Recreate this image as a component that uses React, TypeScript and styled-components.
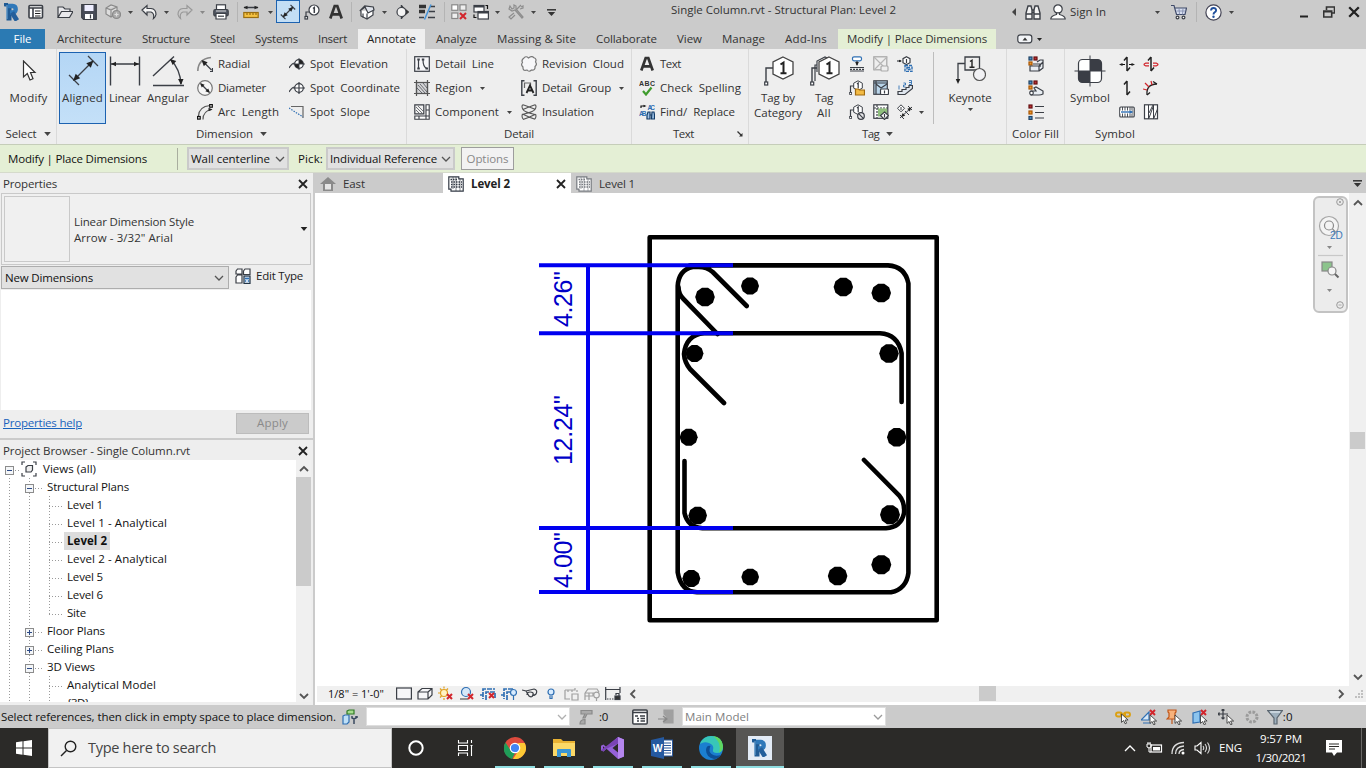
import React, { useLayoutEffect, useRef, useState } from "react";
import styled, { createGlobalStyle, css } from "styled-components";

const INK = "#3b3f46";
const BLUE = "#2f6fb3";

const GlobalStyle = createGlobalStyle`
  * { box-sizing: border-box; }
  html, body { margin: 0; padding: 0; overflow: hidden; }
  body { font-family: "Open Sans", "Noto Sans", sans-serif; font-size: 11.5px; color: #333; }
  svg { display: block; flex: none; }
`;

/* ---------- text with an optional fixed advance width ---------- */
const TextSpan = styled.span<{ $size?: number; $color?: string; $bold?: boolean; $underline?: boolean }>`
  display: inline-block;
  flex: none;
  white-space: pre;
  line-height: 16px;
  font-size: ${(p) => p.$size ?? 11.5}px;
  font-weight: ${(p) => (p.$bold ? 700 : 400)};
  color: ${(p) => p.$color ?? "inherit"};
  text-decoration: ${(p) => (p.$underline ? "underline" : "none")};
`;

type LabelProps = { children: string; w?: number; size?: number; color?: string; bold?: boolean; underline?: boolean };
function Label({ children, w, size, color, bold, underline }: LabelProps) {
  const ref = useRef<HTMLSpanElement>(null);
  const [spacing, setSpacing] = useState(0);
  useLayoutEffect(() => {
    if (!w || !ref.current) return;
    const range = document.createRange();
    range.selectNodeContents(ref.current);
    const natural = range.getBoundingClientRect().width;
    setSpacing((w - natural) / children.length);
  }, [w, children]);
  return (
    <TextSpan
      ref={ref}
      $size={size}
      $color={color}
      $bold={bold}
      $underline={underline}
      style={w ? { width: w, letterSpacing: spacing } : undefined}
    >
      {children}
    </TextSpan>
  );
}

/* ---------- icons ---------- */
type IconProps = { w?: number; h?: number; box?: string; children: React.ReactNode };
const Icon = ({ w = 16, h = 16, box, children }: IconProps) => (
  <svg width={w} height={h} viewBox={box ?? `0 0 ${w} ${h}`} fill="none" stroke={INK} strokeWidth={1.2}>
    {children}
  </svg>
);
const Caret = ({ s = 5, c = "#444" }: { s?: number; c?: string }) => (
  <Icon w={s} h={Math.ceil(s / 2)} box="0 0 10 6"><path d="M0 0h10L5 6z" fill={c} stroke="none" /></Icon>
);
const Chevron = ({ d = "down", c = "#555", sw = 1.3 }: { d?: "down" | "up" | "left" | "right"; c?: string; sw?: number }) => {
  const paths = { down: "M1 3l4 4 4-4", up: "M1 7l4-4 4 4", left: "M7 1L3 5l4 4", right: "M3 1l4 4-4 4" };
  return <Icon w={10} h={10}><path d={paths[d]} stroke={c} strokeWidth={sw} /></Icon>;
};
const CloseX = ({ s = 10, sw = 1.8 }: { s?: number; sw?: number }) => (
  <Icon w={s} h={s} box="0 0 10 10"><path d="M1 1l8 8M9 1l-8 8" stroke="#222" strokeWidth={sw} /></Icon>
);
const CaretBar = () => (
  <Icon w={9} h={7}><path d="M0 .8h9" stroke="#333" strokeWidth={1.5} /><path d="M.8 3h7.4L4.5 7z" fill="#333" stroke="none" /></Icon>
);
const RLetter = ({ w = 16, h = 18 }: { w?: number; h?: number }) => (
  <Icon w={w} h={h} box="0 0 16 18">
    <path d="M.5 3.200V1H4M5 17.500V2" stroke="#1f5a94" strokeWidth={5} />
    <path d="M4 3h4.500q3.200.3 3.200 3.200T8.500 9.500H6" stroke="#2f78b9" strokeWidth={4.400} />
    <path d="M8 9.500l5 8" stroke="#245f9b" strokeWidth={4.800} />
    <path d="M3 2v14" stroke="#6ba6d8" strokeWidth={1} />
  </Icon>
);
const HexOne = ({ double }: { double?: boolean }) => (
  <Icon w={32} h={32}>
    <path d="M11 13H4v14" strokeWidth={1.4} />
    <rect x="2.700" y="27" width="3" height="3" fill="#fff" />
    {double && <><path d="M15 10H7v16" /><path d="M9 17V6l8-4 4 2" fill="#fff" /></>}
    <path d="M21 2l10 5v12l-10 5-10-5V7z" fill="#fff" stroke="#444" strokeWidth={1.3} />
    <path d="M18.500 9.500l3-2v11M18.500 18.200h6" stroke="#222" strokeWidth={2} />
  </Icon>
);
const TinyHex = () => (
  <>
    <path d="M1.500 13V6H5" />
    <rect x=".6" y="12.500" width="2" height="2" fill="#fff" strokeWidth={0.8} />
    <path d="M9 .8l4.300 2.400v5L9 10.500 4.700 8.200v-5z" fill="#fff" strokeWidth={1} />
    <path d="M8 4l1.200-1v5.300" />
  </>
);
const arrow = (x: number, y: number, a: number, s = 5, c = "#222") => (
  <path d={`M0 0l${-s} ${-s * 0.45}v${s * 0.9}z`} transform={`translate(${x} ${y}) rotate(${a})`} fill={c} stroke="none" />
);
const redX = (x: number, y: number, s = 6) => (
  <path d={`M${x} ${y}l${s} ${s}M${x + s} ${y}l${-s} ${s}`} stroke="#d2252c" strokeWidth={2} />
);
const cursor = (x: number, y: number, k = 0.6) => (
  <path d="M0 0v14l3.500-3.200 2.500 5.500 2.500-1-2.500-5.300H11z" transform={`translate(${x} ${y}) scale(${k})`} fill="#fff" stroke="#333" strokeWidth={1.4} />
);
const swatches = (
  <>
    <rect x="1" y="1" width="3" height="3" fill="#4a90c8" stroke="#246" />
    <rect x="6" y="1" width="3" height="3" fill="#c02f35" stroke="#611" />
    <rect x="1" y="6" width="3" height="3" fill="#ef9a2d" stroke="#a50" />
  </>
);

const ic: Record<string, React.ReactNode> = {
  menu: <Icon><rect x="1" y="1.500" width="13.500" height="12.500" rx="1" fill="#fff" strokeWidth={1.6} /><path d="M1 4h13M5 4v10" strokeWidth={1.6} /><path d="M7 7h5.500M7 9.500h5.500M7 12h5.500" stroke="#222" /></Icon>,
  open: <Icon><path d="M1 13.500V3h5l2 2h5v2.500M1 13.500l3.500-6H16l-3.500 6z" fill="#e9e9ec" /></Icon>,
  save: <Icon><path d="M.7.7h14.600v14.600H2.500L.7 13.500z" fill="#474b57" /><rect x="3.500" y="1" width="9" height="6" fill="#eef" stroke="none" /><rect x="4" y="10" width="8" height="5" fill="#fff" stroke="none" /><path d="M9.500 10.500v4" /></Icon>,
  sync: <Icon><path d="M1 4l5-3 6 2v6l-6 4-5-3zM1 4l5 2 6-3M6 6v7" stroke="#8a8a8a" fill="#ddd" /><circle cx="11.500" cy="10.500" r="4" fill="#aaa" stroke="#8a8a8a" /><path d="M9.500 10.500h4M11.500 8.500v4" stroke="#ddd" /></Icon>,
  undo: <Icon><path d="M1 6l5-4.500v3h4q5 .5 5 6-.5 2.500-2.500 4 1.200-5-2.500-6.500H6v3z" fill="#f4f4f4" /></Icon>,
  redo: <Icon><path d="M15 6l-5-4.500v3H6q-5 .5-5 6 .5 2.500 2.500 4Q2.300 9.500 6 8h4v3z" stroke="#999" /></Icon>,
  print: <Icon><rect x="3.500" y=".8" width="9" height="5" fill="#fff" /><rect x=".8" y="5.500" width="14.400" height="6.500" rx="1.500" fill="#555b66" /><path d="M3 7h10" stroke="#fff" strokeWidth={0.8} /><path d="M3 9.500h10v5.500H3z" fill="#fff" /><path d="M5 12.200h6" /></Icon>,
  measure: <Icon><path d="M1 3.500h14" strokeWidth={1.5} />{arrow(15.5, 3.5, 0, 4)}{arrow(0.5, 3.5, 180, 4)}<rect x=".8" y="8.500" width="14.400" height="5" fill="#f5c242" stroke="#9a6d10" /><path d="M4 9v2M7 9v2M10 9v2M13 9v2" stroke="#9a6d10" /></Icon>,
  alignedS: <Icon><path d="M3 13L13 3M.8 10.500l4.700 4.700M10.500.8l4.700 4.700" />{arrow(13.3, 2.7, -45, 5)}{arrow(2.7, 13.3, 135, 5)}</Icon>,
  tagS: <Icon><path d="M2 13V8h4" /><rect x="1" y="12.500" width="2.500" height="2.500" fill="#fff" /><circle cx="10" cy="6" r="5" fill="#fff" /><path d="M9 4.500l1.300-1V9" strokeWidth={1.5} /></Icon>,
  bigA: <Icon w={14} h={16}><path d="M1.300 14.500L5.700 2h2.600l4.400 12.500M3 10.300h8" stroke="#333" strokeWidth={2.700} /></Icon>,
  house: <Icon><path d="M2 7v5l6 3 6-4V6" fill="#fff" /><path d="M.8 7l5-5 8.500 1L15 6l-6 3-3-6z" fill="#dfe3ea" /><path d="M8 9.500V15M4 9.500v4" /></Icon>,
  section: <Icon w={14}><path d="M7 2.500L13.500 8 7 13.500z" fill="#333" stroke="#333" /><circle cx="6.500" cy="8" r="4.500" fill="#f4f4f4" /><path d="M6.500 1v2.500M6.500 12.500V15" strokeWidth={1.500} /></Icon>,
  thin: <Icon><path d="M0 2.500h7M0 7.500h6" strokeWidth={3.400} stroke="#333" /><path d="M0 13.500h5M11 2.500h5M10 7.500h6M9 13.500h7" strokeWidth={1.500} /><path d="M12 .5L5.500 15.500" stroke="#4593d8" strokeWidth={1.500} /></Icon>,
  closeWin: <Icon><rect x=".8" y=".8" width="6" height="5.500" fill="#fff" stroke="#888" /><rect x="9" y=".8" width="6" height="5.500" stroke="#888" fill="#eee" /><rect x=".8" y="9" width="6" height="5.500" stroke="#888" fill="#eee" />{redX(9, 9)}</Icon>,
  switchWin: <Icon><rect x="1" y="1.500" width="10" height="6.500" fill="#fff" /><path d="M1 2.700h10" strokeWidth={1.600} /><rect x="5" y="7.500" width="10.400" height="7.500" fill="#fff" /><path d="M5 8.700h10.400" strokeWidth={1.600} /><path d="M12.500 1.500h2V5M1 10.500v3h2.500" stroke="#111" /></Icon>,
  tools: <Icon><path d="M1 5l3 2 3-1 7 8 1-1-7-8V2L6 1v3L4 5 2 2zM13 1L9 5M6 9l-5 4 2 2 4-4M12 5l3-1V2l-2 1" stroke="#8d8d8d" /></Icon>,
  binoc: <Icon><path d="M3 2h3l1 4v9H1V9zM13 2h-3L9 6v9h6V9zM7 6h2M1.500 10h5M9.500 10h5M7 8.500h2" fill="#f3f3f3" strokeWidth={1.400} /></Icon>,
  person: <Icon><circle cx="8" cy="5" r="4.200" fill="#fff" /><path d="M.8 15q0-3 5.700-4.500V9h3v1.500q5.700 1.500 5.700 4.500z" fill="#fff" /></Icon>,
  cart: <Icon><path d="M0 1.500h3L5.500 10.500H14L15.500 4H4" fill="#d7def0" stroke="#3f4a68" /><path d="M5.500 7h9M8 4.500l.5 6M12 4.500l-.5 6" stroke="#7c88a8" strokeWidth={0.800} /><circle cx="6.500" cy="13.500" r="1.400" fill="#fff" /><circle cx="12.500" cy="13.500" r="1.400" fill="#fff" /></Icon>,
  restore: <Icon w={12} h={12}><path d="M3.500 4V1h8v6H9M.7 5h8v6h-8zM.7 5.700h8" strokeWidth={1.600} stroke="#333" /></Icon>,
  toggle: <Icon w={16} h={10}><rect x=".8" y=".8" width="14" height="8" rx="2.500" fill="#f2f4f7" /><path d="M5.500 6.500h5L8 3.500z" fill="#333" stroke="none" /></Icon>,
  /* ribbon, large */
  cursor: <Icon w={16} h={22}><path d="M2.500 1v16l3.800-3.500L9 20l3-1.300-2.500-6.200h4.500z" fill="#fff" stroke="#333" strokeWidth={1.200} /></Icon>,
  aligned: <Icon w={32} h={32}><path d="M7 25L25 7M2 20l10 10M21 1l10 10" strokeWidth={1.300} />{arrow(26.500, 5.500, -45, 7)}{arrow(6, 26, 135, 7)}</Icon>,
  linear: <Icon w={32} h={32}><path d="M1.500 1.500v29M30.500 1.500v29M2 9h28" strokeWidth={1.400} />{arrow(30, 9, 0, 5)}{arrow(2, 9, 180, 5)}</Icon>,
  angular: <Icon w={32} h={32}><path d="M1 30.500h31M1 21L22 1.500M19 5q9 9 10 24" strokeWidth={1.400} />{arrow(18, 4, 222, 6)}{arrow(29, 30, 88, 6)}</Icon>,
  keynote: <Icon w={32} h={32}><path d="M11 2h14.500v13H11zM11 8.500H4v18" strokeWidth={1.300} />{arrow(4, 29, 90, 5)}<path d="M16 6.500l2-1.300v7M15.500 12.300h5" strokeWidth={1.400} stroke="#222" /><circle cx="25.500" cy="19.500" r="6" fill="#f1f1f4" stroke="#555" /></Icon>,
  symbol: <Icon w={32} h={32}><rect x="4.500" y="4.500" width="23" height="23" rx="4" fill="#fff" /><path d="M16 4.500h7.500q4 0 4 4V16H16zM16 16v11.500H8.500q-4 0-4-4V16z" fill="#3a3d45" stroke="none" /><path d="M16 .5v31M.5 16h31" strokeWidth={1} /></Icon>,
  /* ribbon, small */
  radial: <Icon><path d="M.8 15Q1 3 14 1.500" stroke="#888" strokeWidth={1.600} /><path d="M6 5.500l8.500 8.500M13 15.500h2.500V12" />{arrow(4.500, 4, 225, 6)}</Icon>,
  diameter: <Icon><circle cx="8" cy="8" r="7.300" stroke="#777" fill="#f6f6f6" /><path d="M4 4l8 8" />{arrow(13, 13, 45, 4.500)}{arrow(3, 3, 225, 4.500)}</Icon>,
  arcLength: <Icon><path d="M1.500 12Q2 2.500 13 1.500M6 15.500Q6 7 14.500 5.500" stroke="#555" />{arrow(15.500, 5.500, 0, 4)}<rect x=".6" y="12.500" width="2.600" height="2.600" fill="#fff" stroke="#111" /><rect x="12.700" y=".6" width="2.600" height="2.600" fill="#fff" stroke="#111" /></Icon>,
  spotElev: <Icon><path d="M0 12q3-5 6-5" /><circle cx="10" cy="8" r="4.300" fill="#fff" /><path d="M10 3.700A4.300 4.300 0 0 1 14.300 8H10zM10 12.300A4.300 4.300 0 0 1 5.700 8H10z" fill="#222" stroke="none" /><path d="M10 2v12M4 8h12" strokeWidth={0.900} /></Icon>,
  spotCoord: <Icon><path d="M0 12q3-5 6-5" /><circle cx="10" cy="8" r="4.300" fill="#fff" /><path d="M10 2v12M4 8h12" /></Icon>,
  spotSlope: <Icon><path d="M2 2.500h12V14" stroke="#666" /><path d="M0 4l14 9" stroke={BLUE} strokeDasharray="1.500 1.200" /></Icon>,
  detailLine: <Icon><rect x=".7" y=".7" width="14.600" height="14.600" fill="#f7f7f9" /><path d="M4.500 3.500v9M9 3.500q0 8 4 9" strokeWidth={1.200} /><path d="M3.300 3.500h2.500M3.300 12.500h2.500M7.800 3.500h2.500M11.500 12.500h2.500" strokeWidth={2} /></Icon>,
  region: <Icon><rect x="2.500" y="2.500" width="11" height="11" fill="#d4d4d6" /><path d="M0 2.500h16M0 13.500h16M2.500 0v16M13.500 0v16" stroke="#555" /><path d="M4 5l7 8M6 4l7 8M3 8l5 5M9 3l4 5" strokeWidth={0.700} /></Icon>,
  component: <Icon><path d="M.8.8h9v9h-9z" fill="#f1f1f1" /><path d="M2 3l6 6M4 2l5 5M2 6l3 3" strokeWidth={0.700} /><path d="M12 .8h3.200v14.400H.8V12H12zM12 6h3M12 12h3M5 12v3M12 12v3" fill="#fff" strokeWidth={1.100} /></Icon>,
  cloud: <Icon><path d="M3 2q2-2.500 4.500 0Q11-.8 13 1.800q3 1 1.500 4.200 2 2.500-.5 4.500.5 4-3.500 3.500Q8 16.500 6 14q-4.500 1.500-4-3Q-.5 9 1.500 6.500 0 4 3 2z" fill="#f7f7f9" stroke="#777" /></Icon>,
  group: <Icon><path d="M3.500.8H.8v14.400h2.700M12.500.8h2.700v14.400h-2.700" strokeWidth={1.400} /><path d="M3.500 8V3h6v2" stroke="#666" /><path d="M5.500 13L9 5.500l3.500 7.500M7 10.500h4" strokeWidth={1.800} stroke="#222" /></Icon>,
  insulation: <Icon><path d="M2 .8q6 2 12 4.500-1 2.500-12 5 6 3 12 5M14 .8Q8 3 2 5.500q1 2.500 12 5-6 3-12 5M2 .8q-2 1 0 4.700M14 .8q2 1 0 4.700M2 10.300q-2 1 0 4.700M14 10.300q2 1 0 4.700" stroke="#555" strokeWidth={1.100} /></Icon>,
  launcher: <Icon w={6} h={6}><path d="M.5.5l4 4" stroke="#333" /><path d="M5.500 2v3.500H2z" fill="#333" stroke="none" /></Icon>,
  beam: <Icon><rect x="3.500" y=".8" width="9" height="4" rx="1.500" stroke={BLUE} fill="#fff" /><path d="M8 5v4" />{arrow(8, 10, 90, 4)}<path d="M1 11.500h14M1 15h14" /><path d="M1 13.300h14" strokeDasharray="2 1" /></Icon>,
  greyX: <Icon><rect x=".8" y=".8" width="13" height="13" stroke="#a5a5a5" /><path d="M1 1l13 13M14 1L1 14" stroke="#b5b5b5" /><rect x="8" y="10" width="7" height="5" rx="1" fill="#eee" stroke="#aaa" /></Icon>,
  roomTag: <Icon><path d="M0 5h4" />{arrow(5, 5, 0, 3)}<path d="M9.500.8L13 2.700v4L9.500 8.600 6 6.700v-4z" fill="#fff" /><path d="M9.500 3v4" /><path d="M8 9.500h7v6H8zM10 11.500h3v2h-3z" stroke={BLUE} strokeDasharray="3 1" strokeWidth={1.400} /></Icon>,
  hexFolder: <Icon><TinyHex /><path d="M6.500 9h3l1 1h5v5h-9z" fill="#f3bb45" stroke="#a06a10" /></Icon>,
  areaTag: <Icon><rect x=".8" y=".8" width="13.500" height="13.500" fill="#b9d5ea" /><path d="M1 3h13M3 1v13M3 4l5 4 6-4" /><rect x="7.500" y="9" width="8" height="5.500" rx="1" fill="#fff" /><path d="M11.500 10.500v3" /></Icon>,
  stairs: <Icon><path d="M1 14.500v-3h4v-2h4v-2h3V5.500h3.500v3L8 14.500z" fill="#dfe6ee" /><path d="M2 5.500v4M6.500 3h2v2h-2v2h2M12 .5h2.500v4H12M12 2.500h2" stroke={BLUE} strokeWidth={0.900} /></Icon>,
  hexSlash: <Icon><TinyHex /><circle cx="12" cy="12" r="3.300" fill="#e6e6e8" /><path d="M9.700 9.700l4.600 4.600" /></Icon>,
  viewTag: <Icon><rect x=".8" y=".8" width="14" height="13.500" fill="#fff" /><path d="M1 4h14M4 1v13" strokeDasharray="2 1" /><rect x="5" y="4.500" width="9" height="8" fill="#8fbf7d" stroke="none" /><path d="M11.500 8l4 3.500-4 4-4-4z" fill="#fff" /><path d="M11.500 10v3.500" /></Icon>,
  multiRebar: <Icon><path d="M4 .8l3.500 3.500L4 7.800.5 4.300z" fill="#fff" strokeWidth={1} /><path d="M4 3v3M3 14L15 3M3 11l4 4M8 7l4 4M11 2l4 4" strokeWidth={1} />{arrow(14.500, 3.500, -42, 4)}{arrow(4, 13, 138, 4)}</Icon>,
  fillDuct: <Icon>{swatches}<path d="M2 10h9v5H2zM11 10l4-4v6l-4 3M9 6l3-2h3v3" fill="#e8edf2" /><path d="M5 8h7v3" /></Icon>,
  fillPipe: <Icon>{swatches}<path d="M3 11h5L6 8l2-1 7 4v3q-2 1-4 1H3z" fill="#e8edf2" /><circle cx="3.500" cy="13" r="1.800" fill="#fff" /></Icon>,
  fillLegend: <Icon><rect x="1" y="1" width="3" height="3" fill="#c02f35" stroke="#611" /><rect x="1" y="7" width="3" height="3" fill="#ef9a2d" stroke="#a50" /><rect x="1" y="12.500" width="3" height="3" fill="#4a90c8" stroke="#246" /><path d="M7 2.500h9M7 8.500h9M7 14h9" /></Icon>,
  span1: <Icon><path d="M8 1v14M8 1L5 4.500M8 15l3-3.500" strokeWidth={1.500} stroke="#222" /><path d="M1 8.500h5M10 8.500h5" stroke="#111" />{arrow(16, 8.500, 0, 3.500)}{arrow(0, 8.500, 180, 3.500)}</Icon>,
  span2: <Icon><path d="M8 1v14M8 1L5 4.500M8 15l3-3.500" strokeWidth={1.500} stroke="#222" /><path d="M6 9.800H2.500q-3-1.300 0-2.600H6M10 9.800h3.500q3-1.300 0-2.600H10" stroke="#d2252c" /></Icon>,
  span3: <Icon><path d="M8 1v14M8 1L5 4.500M8 15l3-3.500" strokeWidth={1.500} stroke="#222" /></Icon>,
  span4: <Icon><path d="M4 15Q3 4 14 4M4 15l3-2.500M10 1.500l4 2.500" stroke="#222" strokeWidth={1.300} /><path d="M0 9l4 1M2 3l4 4M8 1l1 4" stroke="#d2252c" /></Icon>,
  areaSym: <Icon><rect x=".8" y="3" width="14.400" height="10" rx="1" fill="#fff" /><path d="M3.500 3v10M6 3v10M8.500 3v10M11 3v10M13 3v10" strokeWidth={0.900} /><path d="M1 8h12" stroke="#fff" strokeWidth={3} /><path d="M2 8h11" stroke={BLUE} strokeWidth={1.400} />{arrow(14.500, 8, 0, 4, BLUE)}</Icon>,
  fabric: <Icon><rect x="1.500" y=".8" width="13" height="14" fill="#fff" /><path d="M5.500 1v14M10.500 1v14M6 14l4-11M6 9l4-8M11 14l3.500-9" strokeWidth={1} /></Icon>,
  editType: <Icon><path d="M1 3l1.500-2H7v5H1zM8.500 3L10 1h5v5.500H8.500zM1 9l1.500-2H7v8H1z" fill="#fff" /><rect x="9" y="8" width="6" height="7.500" fill="#cfe0f2" stroke="#234" /><path d="M10 10.500h4M10 13h1M13 13h1" stroke={BLUE} strokeWidth={1.600} /></Icon>,
  home: <Icon><path d="M0 8l8-7 8 7h-3v7H3V8z" fill="#8a8a8a" stroke="none" /><path d="M5 8h6v5.500H5z" fill="#e5e5e5" stroke="none" /></Icon>,
  views: <Icon><path d="M4 1H1v3M12 1h3v3M1 12v3h3M15 12v3h-3" /><path d="M5 6l2-1.500h4.500V9L10 11H5z" fill="#eee" /></Icon>,
};

const PlanIcon = ({ c }: { c: string }) => (
  <Icon><path d="M.8.800h10v2h4.400v12.400H3v-2H.8z" stroke={c} fill="#fff" /><path d="M2.500 3.500H10M3 6h11M3 8.500h11M3 11h11" stroke={c} strokeDasharray="1.500 1" strokeWidth={1.300} /><path d="M5 1v12M8 1v14M12 3v12" stroke={c} strokeWidth={0.600} /></Icon>
);
const SpellIcon = () => (
  <Icon>
    <text x="0" y="6" fontSize="7" fontWeight="700" textLength="16" fill="#333" stroke="none" fontFamily="Liberation Sans, sans-serif">ABC</text>
    <path d="M4 11l3 3.500 5.500-7" stroke="#3f9c2d" strokeWidth={2.200} />
  </Icon>
);
const ReplaceIcon = () => (
  <Icon>
    <g fontSize="6.500" fontWeight="700" fill={BLUE} stroke="none" fontFamily="Liberation Sans, sans-serif">
      <text x="8.500" y="5.500" textLength="7.500">AC</text>
      <text x="0" y="12" textLength="7.500">AB</text>
    </g>
    <path d="M2 4V2h4" stroke="#111" />{arrow(7.500, 2, 0, 3)}
    <path d="M9 8h2v7H8v-4zM13 8h2l.5 3v4h-3zM11 11h2" fill="#9fc3e8" stroke="#123a66" />
  </Icon>
);

/* ---------- frame ---------- */
const Screen = styled.div`
  width: 1366px; height: 768px; display: flex; flex-direction: column; background: #cbcbcb; overflow: hidden;
`;
const Row = styled.div<{ $gap?: number; $pl?: number; $pb?: number; $h?: number }>`
  display: flex; align-items: center; gap: ${(p) => p.$gap ?? 0}px; padding: 0 0 ${(p) => p.$pb ?? 0}px ${(p) => p.$pl ?? 0}px;
  ${(p) => p.$h && css`height: ${p.$h}px;`} flex: none;
`;
const Slot = styled.div<{ $w: number; $active?: boolean }>`
  width: ${(p) => p.$w}px; height: 100%; flex: none; display: flex; align-items: center; justify-content: center;
  ${(p) => p.$active && css`background: #c3def5; border: 1px solid #1c62b0; height: 23px; margin-bottom: 1px;`}
`;
const Spacer = styled.div<{ $w?: number }>`${(p) => (p.$w ? css`width: ${p.$w}px; flex: none;` : css`flex: 1;`)}`;
const VLine = styled.div<{ $h: number; $c?: string }>`width: 1px; height: ${(p) => p.$h}px; background: ${(p) => p.$c ?? "#b4b4b4"}; flex: none;`;

const TitleBar = styled.header`height: 24px; display: flex; align-items: center; flex: none;`;
const TitleText = styled.div`margin-bottom: 4px; display: flex;`;
const TabStrip = styled.nav`height: 25px; padding-top: 5px; display: flex; align-items: stretch; flex: none;`;
const RibbonTab = styled.div<{ $kind?: "file" | "active" | "context" }>`
  display: flex; align-items: center; justify-content: center; flex: none; padding: 0 10px;
  ${(p) => p.$kind === "file" && css`width: 45px; margin-right: 2px; background: #2b7ab3; color: #fff; padding: 0;`}
  ${(p) => p.$kind === "active" && css`background: #efefef; padding: 0 9px; margin: 0 1px; color: #222;`}
  ${(p) => p.$kind === "context" && css`background: #e4efd5; padding: 0 9px; margin: 0 0 0 1px;`}
`;
const ToggleBox = styled.div`display: flex; align-items: center; gap: 4px; padding-left: 21px;`;

const Ribbon = styled.section`height: 95px; background: #eee; display: flex; flex: none;`;
const Panel = styled.div<{ $w: number; $last?: boolean }>`
  width: ${(p) => p.$w}px; flex: none; display: flex; flex-direction: column; border-right: 1px solid ${(p) => (p.$last ? "transparent" : "#dadada")};
`;
const PanelBody = styled.div<{ $pl?: number }>`height: 76px; display: flex; padding: 3px 0 0 ${(p) => p.$pl ?? 0}px;`;
const PanelTitle = styled.div<{ $shift?: number }>`
  height: 18px; display: flex; align-items: center; justify-content: ${(p) => (p.$shift ? "flex-start" : "center")}; gap: 7px; padding-left: ${(p) => p.$shift ?? 0}px;
`;
const BigButton = styled.div<{ $w: number; $active?: boolean }>`
  width: ${(p) => p.$w}px; height: 72px; flex: none; display: flex; flex-direction: column; align-items: center; padding-top: 3px;
  ${(p) => p.$active && css`background: linear-gradient(#b4d6f5, #c4e0f8); box-shadow: inset 0 0 0 1px #1c62b0;`}
`;
const BigIcon = styled.div`height: 32px; display: flex; align-items: center; margin-bottom: 3px;`;
const BigLabel = styled.div`height: 15px; display: flex; align-items: center;`;
const BigCaret = styled.div`padding-top: 3px;`;
const Stack = styled.div<{ $w: number }>`width: ${(p) => p.$w}px; flex: none; display: flex; flex-direction: column;`;
const Command = styled.div`height: 24px; display: flex; align-items: center; gap: 5px;`;
const CaretBox = styled.div`padding-left: 3px;`;
const IconGrid = styled.div<{ $cols: number }>`
  display: grid; flex: none; align-content: start; grid-template-columns: repeat(${(p) => p.$cols}, 24px); grid-auto-rows: 24px; place-items: center;
`;
const GridCaret = styled.div`height: 72px; width: 14px; flex: none; display: flex; align-items: flex-end; padding-bottom: 10px;`;

const OptionsBar = styled.section`
  height: 29px; flex: none; display: flex; align-items: center; background: #e4efd5; border-top: 1px solid #c5cdb9; border-bottom: 1px solid #d5dacb;
  padding-left: 8px; color: #111;
`;
const Combo = styled.div<{ $w: number; $h?: number; $bg?: string; $bd?: string }>`
  width: ${(p) => p.$w}px; height: ${(p) => p.$h ?? 23}px; flex: none; display: flex; align-items: center; justify-content: space-between;
  padding: 0 2px; background: ${(p) => p.$bg ?? "#e1e1e1"}; border: ${(p) => p.$bd ?? "2px solid #cacaca"}; color: #111;
`;
const OptionsButton = styled.div`
  width: 53px; height: 23px; display: flex; align-items: center; justify-content: center; background: #f2f2f2; border: 1px solid #9d9d9d; color: #888;
`;

const Workspace = styled.main`height: 532px; display: flex; flex: none;`;
const Sidebar = styled.aside`width: 313px; background: #eee; display: flex; flex-direction: column; flex: none;`;
const PaletteHeader = styled.div`height: 20px; flex: none; display: flex; align-items: center; justify-content: space-between; padding: 2px 5px 0 3px;`;
const TypeSelector = styled.div`
  height: 72px; width: 310px; margin-left: 1px; flex: none; display: flex; align-items: center; border: 1px solid #c9c9c9; padding: 0 2px; background: #f0f0f0;
`;
const TypePreview = styled.div`width: 66px; height: 66px; border: 1px solid #c9c9c9; margin-right: 4px;`;
const TypeNames = styled.div`display: flex; flex-direction: column; flex: 1; padding-top: 2px;`;
const TypeRow = styled.div`height: 25px; flex: none; display: flex; align-items: center; padding-left: 1px;`;
const PropertyList = styled.div`height: 120px; width: 310px; margin-left: 1px; background: #fff; flex: none;`;
const PaletteFooter = styled.div`
  height: 30px; flex: none; display: flex; align-items: center; justify-content: space-between; padding: 0 4px 2px 3px; border-bottom: 2px solid #cbcbcb;
`;
const ApplyButton = styled.div`
  width: 73px; height: 21px; background: #cbcbcb; border: 1px solid #bcbcbc; color: #8a8a8a; display: flex; align-items: center; justify-content: center;
`;
const TreeArea = styled.div`height: 242px; flex: none; display: flex; padding-right: 2px;`;
const Tree = styled.div`flex: 1; background: #fff; color: #111; overflow: hidden;`;
const TreeRow = styled.div`height: 18px; display: flex; align-items: stretch;`;
const Guide = styled.div<{ $w: number; $full?: boolean; $half?: boolean; $stub?: boolean }>`
  width: ${(p) => p.$w}px; flex: none; display: flex; justify-content: flex-start;
  background-image: ${(p) =>
    [
      p.$full || p.$half ? "repeating-linear-gradient(#9a9a9a 0 1px, transparent 1px 3px)" : "",
      p.$stub ? "repeating-linear-gradient(90deg, #9a9a9a 0 1px, transparent 1px 3px)" : "",
    ].filter(Boolean).join(",") || "none"};
  background-size: ${(p) => [p.$full ? "1px 100%" : "", p.$half ? "1px 10px" : "", p.$stub ? "15px 1px" : ""].filter(Boolean).join(",")};
  background-position: ${(p) => [p.$full || p.$half ? "9px 0" : "", p.$stub ? "9px 10px" : ""].filter(Boolean).join(",")};
  background-repeat: no-repeat;
`;
const Expander = styled.div`padding: 6px 0 0 5px;`;
const TreeText = styled.div<{ $selected?: boolean }>`
  display: flex; align-items: center; padding: 0 3px; ${(p) => p.$selected && css`background: #dcdcdc;`}
`;
const ScrollColumn = styled.div<{ $w: number }>`
  width: ${(p) => p.$w}px; flex: none; background: #f0f0f0; display: flex; flex-direction: column; align-items: center;
`;
const Thumb = styled.div<{ $w: number; $h: number }>`width: ${(p) => p.$w}px; height: ${(p) => p.$h}px; background: #cbcbcb; flex: none;`;
const Splitter = styled.div`width: 2px; background: #cbcbcb; flex: none;`;
const DocArea = styled.div`flex: 1; display: flex; flex-direction: column; background: #fff;`;
const DocTabs = styled.div`height: 20px; flex: none; display: flex; background: #cbcbcb; align-items: stretch; padding-right: 4px;`;
const DocTab = styled.div<{ $active?: boolean }>`
  width: 128px; display: flex; align-items: center; gap: 7px; padding: 1px 5px 0 5px; ${(p) => p.$active && css`background: #fff; color: #222;`}
`;
const CanvasRow = styled.div`height: 493px; flex: none; display: flex;`;
const CanvasBox = styled.div`position: relative; width: 1034px; flex: none;`;
const NavBar = styled.div`
  position: absolute; right: 1px; top: 3px; width: 35px; height: 117px; border: 2px solid #c3c3c3; border-radius: 6px; background: #ececec;
  display: flex; flex-direction: column; align-items: center;
`;
const ViewBar = styled.div`height: 16px; flex: none; background: #f0f0f0; margin-left: 2px; display: flex; align-items: center; padding-bottom: 1px;`;
const StatusBar = styled.footer`height: 23px; flex: none; display: flex; align-items: center; background: #cbcbcb; color: #111;`;
const Taskbar = styled.footer`height: 40px; flex: none; display: flex; align-items: stretch; background: #2b2a28; color: #fff;`;
const SearchBox = styled.div`
  width: 344px; background: #f1f1f1; border: 1px solid #c4c4c4; display: flex; align-items: center; gap: 11px; padding-left: 11px; color: #444;
`;
const TaskItem = styled.div<{ $open?: boolean; $active?: boolean }>`
  width: 48px; margin-right: 1px; display: flex; align-items: center; justify-content: center; flex: none;
  background-color: ${(p) => (p.$active ? "#575654" : "transparent")};
  background-image: ${(p) => (p.$open || p.$active ? "linear-gradient(#8fdde0, #8fdde0)" : "none")};
  background-size: ${(p) => (p.$active ? "48px 2px" : "40px 2px")}; background-position: center bottom; background-repeat: no-repeat;
`;
const ClockBox = styled.div`width: 50px; display: flex; flex-direction: column; align-items: center; justify-content: center; gap: 3px;`;
const RevitTile = styled.div`width: 24px; height: 24px; background: #e3ebf6; display: flex; align-items: center; justify-content: center;`;

/* ---------- sections ---------- */
const quickAccess: [React.ReactNode, number, boolean?][] = [
  [<RLetter />, 24], [ic.menu, 24], [null, 5], [ic.open, 24], [ic.save, 24], [ic.sync, 24], [<Caret />, 11], [ic.undo, 26], [<Caret />, 9],
  [ic.redo, 28], [<Caret c="#888" />, 7], [ic.print, 30], [<VLine $h={20} />, 2], [ic.measure, 26], [<Caret />, 12], [ic.alignedS, 24, true],
  [ic.tagS, 24], [ic.bigA, 23], [<VLine $h={20} />, 8], [ic.house, 23], [<Caret />, 12], [ic.section, 24], [ic.thin, 26], [<VLine $h={20} />, 8],
  [ic.closeWin, 21], [ic.switchWin, 24], [<Caret />, 9], [ic.tools, 28], [<Caret />, 7], [<CaretBar />, 28],
];

const tabs: [string, number, ("file" | "active" | "context")?][] = [
  ["File", 18, "file"], ["Architecture", 65], ["Structure", 48], ["Steel", 25], ["Systems", 43], ["Insert", 29], ["Annotate", 49, "active"],
  ["Analyze", 41], ["Massing & Site", 79], ["Collaborate", 61], ["View", 25], ["Manage", 43], ["Add-Ins", 42], ["Modify | Place Dimensions", 140, "context"],
];

const Cmd = ({ icon, text, w, caret }: { icon: React.ReactNode; text: string; w: number; caret?: boolean }) => (
  <Command>{icon}<Label w={w}>{text}</Label>{caret && <CaretBox><Caret /></CaretBox>}</Command>
);
const Big = ({ icon, lines, w, active, caret }: { icon: React.ReactNode; lines: [string, number][]; w: number; active?: boolean; caret?: boolean }) => (
  <BigButton $w={w} $active={active}>
    <BigIcon>{icon}</BigIcon>
    {lines.map(([t, lw]) => <BigLabel key={t}><Label w={lw}>{t}</Label></BigLabel>)}
    {caret && <BigCaret><Caret /></BigCaret>}
  </BigButton>
);

const Header = () => (
  <>
    <TitleBar>
      {quickAccess.map(([node, w, active], i) => <Slot key={i} $w={w} $active={active}>{node}</Slot>)}
      <Spacer $w={106} />
      <TitleText><Label w={225}>Single Column.rvt - Structural Plan: Level 2</Label></TitleText>
      <Spacer $w={114} />
      <Slot $w={8}><Icon w={4} h={8}><path d="M4 0v8L0 4z" fill="#444" stroke="none" /></Icon></Slot>
      <Slot $w={29}>{ic.binoc}</Slot>
      <Slot $w={21}>{ic.person}</Slot>
      <Spacer $w={2} /><Row><Label w={36}>Sign In</Label></Row>
      <Spacer $w={44} />
      <Slot $w={14}><Caret /></Slot>
      <Slot $w={30}>{ic.cart}</Slot>
      <Slot $w={4}><VLine $h={20} /></Slot>
      <Slot $w={31}><Icon w={17} h={17}><circle cx="8.500" cy="8.500" r="7.600" fill="#fff" stroke="#445" /><path d="M6 6.500Q6.200 4 8.500 4t2.600 2.200q0 1.500-1.500 2.200-1.100.6-1.100 2" stroke="#1f4f9c" strokeWidth={1.900} /><circle cx="8.500" cy="12.700" r="1.200" fill="#1f4f9c" stroke="none" /></Icon></Slot>
      <Slot $w={5}><Caret /></Slot>
      <Spacer $w={57} />
      <Slot $w={26}><Icon w={8} h={12}><path d="M0 10.500h8" stroke="#222" strokeWidth={2} /></Icon></Slot>
      <Slot $w={24}>{ic.restore}</Slot>
      <Slot $w={26}><CloseX s={12} sw={1.900} /></Slot>
    </TitleBar>
    <TabStrip>
      {tabs.map(([t, w, kind]) => <RibbonTab key={t} $kind={kind}><Label w={w}>{t}</Label></RibbonTab>)}
      <ToggleBox>{ic.toggle}<Caret c="#222" /></ToggleBox>
    </TabStrip>
  </>
);

const RibbonBar = () => (
  <Ribbon>
    <Panel $w={57}>
      <PanelBody><Big w={57} icon={ic.cursor} lines={[["Modify", 38]]} /></PanelBody>
      <PanelTitle><Label w={31}>Select</Label><Caret s={7} /></PanelTitle>
    </Panel>
    <Panel $w={350}>
      <PanelBody $pl={2}>
        <Big w={47} active icon={ic.aligned} lines={[["Aligned", 41]]} />
        <Big w={38} icon={ic.linear} lines={[["Linear", 32]]} />
        <Big w={48} icon={ic.angular} lines={[["Angular", 42]]} />
        <Spacer $w={5} />
        <Stack $w={92}>
          <Cmd icon={ic.radial} text="Radial" w={32} />
          <Cmd icon={ic.diameter} text="Diameter" w={48} />
          <Cmd icon={ic.arcLength} text="Arc  Length" w={61} />
        </Stack>
        <Stack $w={112}>
          <Cmd icon={ic.spotElev} text="Spot  Elevation" w={78} />
          <Cmd icon={ic.spotCoord} text="Spot  Coordinate" w={90} />
          <Cmd icon={ic.spotSlope} text="Spot  Slope" w={60} />
        </Stack>
      </PanelBody>
      <PanelTitle><Label w={57}>Dimension</Label><Caret s={7} /></PanelTitle>
    </Panel>
    <Panel $w={225}>
      <PanelBody $pl={7}>
        <Stack $w={107}>
          <Cmd icon={ic.detailLine} text="Detail  Line" w={59} />
          <Cmd icon={ic.region} text="Region" w={37} caret />
          <Cmd icon={ic.component} text="Component" w={64} caret />
        </Stack>
        <Stack $w={110}>
          <Cmd icon={ic.cloud} text="Revision  Cloud" w={82} />
          <Cmd icon={ic.group} text="Detail  Group" w={69} caret />
          <Cmd icon={ic.insulation} text="Insulation" w={52} />
        </Stack>
      </PanelBody>
      <PanelTitle><Label w={30}>Detail</Label></PanelTitle>
    </Panel>
    <Panel $w={117}>
      <PanelBody $pl={7}>
        <Stack $w={109}>
          <Command><Row $pl={1} $gap={6}>{ic.bigA}<Label w={21}>Text</Label></Row></Command>
          <Cmd icon={<SpellIcon />} text="Check  Spelling" w={81} />
          <Cmd icon={<ReplaceIcon />} text="Find/  Replace" w={75} />
        </Stack>
      </PanelBody>
      <PanelTitle $shift={41}><Label w={21}>Text</Label><Spacer $w={29} />{ic.launcher}</PanelTitle>
    </Panel>
    <Panel $w={258}>
      <PanelBody $pl={4}>
        <Big w={50} icon={<HexOne />} lines={[["Tag by", 34], ["Category", 48]]} />
        <Big w={42} icon={<HexOne double />} lines={[["Tag", 18], ["All", 14]]} />
        <IconGrid $cols={3}>{[ic.beam, ic.greyX, ic.roomTag, ic.hexFolder, ic.areaTag, ic.stairs, ic.hexSlash, ic.viewTag, ic.multiRebar].map((n, i) => <div key={i}>{n}</div>)}</IconGrid>
        <Spacer $w={2} />
        <GridCaret><Caret /></GridCaret>
        <VLine $h={72} $c="#bdbdbd" />
        <Big w={72} caret icon={ic.keynote} lines={[["Keynote", 43]]} />
      </PanelBody>
      <PanelTitle><Label w={17}>Tag</Label><Caret s={7} /></PanelTitle>
    </Panel>
    <Panel $w={58}>
      <PanelBody $pl={17}><IconGrid $cols={1}><div>{ic.fillDuct}</div><div>{ic.fillPipe}</div><div>{ic.fillLegend}</div></IconGrid></PanelBody>
      <PanelTitle><Label w={47}>Color Fill</Label></PanelTitle>
    </Panel>
    <Panel $w={101} $last>
      <PanelBody>
        <Big w={50} icon={ic.symbol} lines={[["Symbol", 40]]} />
        <IconGrid $cols={2}>{[ic.span1, ic.span2, ic.span3, ic.span4, ic.areaSym, ic.fabric].map((n, i) => <div key={i}>{n}</div>)}</IconGrid>
      </PanelBody>
      <PanelTitle><Label w={40}>Symbol</Label></PanelTitle>
    </Panel>
  </Ribbon>
);

const Options = () => (
  <OptionsBar>
    <Label w={139}>Modify | Place Dimensions</Label>
    <Spacer $w={30} /><VLine $h={22} $c="#a9ae9f" /><Spacer $w={9} />
    <Combo $w={102}><Label w={79}>Wall centerline</Label><Chevron /></Combo>
    <Spacer $w={9} /><Label w={25}>Pick:</Label><Spacer $w={3} />
    <Combo $w={129}><Label w={107}>Individual Reference</Label><Chevron /></Combo>
    <Spacer $w={6} />
    <OptionsButton><Label w={42}>Options</Label></OptionsButton>
  </OptionsBar>
);

const Box = ({ open }: { open?: boolean }) => (
  <Expander><Icon w={9} h={9}><rect x=".5" y=".5" width="8" height="8" fill="#f4f6f8" stroke="#8c8c8c" strokeWidth={1} /><path d={open ? "M2 4.500h5" : "M2 4.500h5M4.500 2v5"} stroke="#2c4a86" strokeWidth={1} /></Icon></Expander>
);

type Node = { t: string; w: number; d: number; open?: boolean; last?: boolean; sel?: boolean };
const nodes: Node[] = [
  { t: "Structural Plans", w: 82, d: 1, open: true },
  { t: "Level 1", w: 36, d: 2 }, { t: "Level 1 - Analytical", w: 100, d: 2 }, { t: "Level 2", w: 40, d: 2, sel: true },
  { t: "Level 2 - Analytical", w: 100, d: 2 }, { t: "Level 5", w: 36, d: 2 }, { t: "Level 6", w: 36, d: 2 }, { t: "Site", w: 19, d: 2, last: true },
  { t: "Floor Plans", w: 58, d: 1 }, { t: "Ceiling Plans", w: 67, d: 1 }, { t: "3D Views", w: 48, d: 1, open: true },
  { t: "Analytical Model", w: 89, d: 2 }, { t: "{3D}", w: 22, d: 2 },
];

const Side = () => (
  <Sidebar>
    <PaletteHeader><Label w={54}>Properties</Label><CloseX /></PaletteHeader>
    <TypeSelector>
      <TypePreview />
      <TypeNames><Label w={120}>Linear Dimension Style</Label><Label w={99}>Arrow - 3/32" Arial</Label></TypeNames>
      <Caret s={8} c="#222" />
    </TypeSelector>
    <TypeRow>
      <Combo $w={228} $bd="1px solid #adadad"><Row $pl={1}><Label w={88}>New Dimensions</Label></Row><Row><Chevron /><Spacer $w={2} /></Row></Combo>
      <Spacer $w={6} /><Row $gap={5} $pb={4}>{ic.editType}<Label w={47} color="#222">Edit Type</Label></Row>
    </TypeRow>
    <PropertyList />
    <PaletteFooter><Label w={79} color="#1a63bd" underline>Properties help</Label><ApplyButton><Label w={31}>Apply</Label></ApplyButton></PaletteFooter>
    <PaletteHeader><Label w={187}>Project Browser - Single Column.rvt</Label><CloseX /></PaletteHeader>
    <TreeArea>
      <Tree>
        <TreeRow>
          <Guide $w={21} $stub><Box open /></Guide>
          <Row>{ic.views}</Row>
          <Spacer $w={3} /><TreeText><Label w={53}>Views (all)</Label></TreeText>
        </TreeRow>
        {nodes.map((n) => (
          <TreeRow key={n.t}>
            <Guide $w={20} $full />
            {n.d === 1 ? (
              <Guide $w={24} $full $stub><Box open={n.open} /></Guide>
            ) : (
              <><Guide $w={20} $full /><Guide $w={24} $full={!n.last} $half={n.last} $stub /></>
            )}
            <TreeText $selected={n.sel}><Label w={n.w} bold={n.sel}>{n.t}</Label></TreeText>
          </TreeRow>
        ))}
      </Tree>
      <ScrollColumn $w={15}><Row $h={17}><Chevron d="up" sw={1.800} /></Row><Thumb $w={15} $h={109} /><Spacer /><Row $h={12}><Chevron sw={1.800} /></Row></ScrollColumn>
    </TreeArea>
  </Sidebar>
);

const bars: [number, number, number][] = [
  [705, 297, 9.8], [750, 286, 9], [843.3, 287, 9.7], [881.2, 293, 9.8], [694.5, 353.5, 9], [889, 353.5, 9.8], [688.7, 437.2, 9], [896.7, 437.2, 9.7],
  [697.7, 515.5, 9.3], [890, 514.7, 10], [691.3, 578.5, 9], [750.2, 577, 8.8], [837.6, 576, 9.8], [881.3, 564.7, 10],
];
const dims: [string, number, number][] = [["4.26\"", 327, 56], ["12.24\"", 465, 70], ["4.00\"", 588, 56]];
const polygon = (x: number, y: number, r: number, n = 10) =>
  Array.from({ length: n }, (_, i) => `${x + r * Math.cos((i * 2 * Math.PI) / n)},${y + r * Math.sin((i * 2 * Math.PI) / n)}`).join(" ");

const Drawing = () => (
  <svg width="1034" height="492" viewBox="315 193 1034 492" fill="none" strokeLinecap="round" strokeLinejoin="round">
    <g stroke="#000" strokeWidth="4.600">
      <rect x="649.700" y="237.300" width="287" height="382.900" />
      <path d="M690 265.400H888q17 1 20.400 18V573q-2 16-17.400 19.300H697q-16-1-19.300-20V286q1-16 15-19h6q8 0 14 5l34 34" />
      <path d="M678.500 287q0 7 5 12l34 35" />
      <path d="M724 403l-34-34q-5.500-7-6-15 2-19 20-20.700H880q18 1 21.600 20V402" />
      <path d="M684.500 461v52q3 14 18 15.300H886q15-1 18-15 1-11-5-18L864 460" />
    </g>
    {bars.map(([x, y, r]) => <polygon key={`${x}-${y}`} fill="#000" points={polygon(x, y, r)} />)}
    <g stroke="#0000f0" strokeWidth="4" strokeLinecap="butt">
      <path d="M539 265.300h194M539 333.200h194M539 528h194M539 592h194M588 264v328" />
    </g>
    {dims.map(([t, y, len]) => (
      <text key={t} transform={`translate(572 ${y}) rotate(-90)`} fontFamily="Liberation Sans, Arial, sans-serif" fontSize="25" textLength={len} fill="#0000c8">{t}</text>
    ))}
  </svg>
);

const viewIcons: React.ReactNode[] = [
  <Icon><rect x=".6" y="2" width="14.800" height="11" fill="#f6f6f8" /></Icon>,
  <Icon><path d="M1 6l4-3.500h10V9l-4 4H1zM1 6h10v7M11 6l4-3.500" fill="#f6f6f8" /></Icon>,
  <Icon><circle cx="6" cy="7" r="3.500" fill="#fff3c4" stroke="#e0a020" /><path d="M6 .5v2M6 12v2M0 7h2M2 2.500l1.500 1.500M10 2.500L8.500 4M2 11.500L3.500 10" stroke="#e0a020" />{redX(9, 8, 5)}</Icon>,
  <Icon><circle cx="7" cy="6" r="4.500" fill="#d6e8f8" stroke={BLUE} /><path d="M1 13h8" stroke="#555" />{redX(9, 8, 5)}</Icon>,
  <Icon><path d="M0 9h3v4M3 11V3h12M6 14V6h9v7" stroke={BLUE} strokeDasharray="5 1" strokeWidth={1.700} />{redX(9, 7, 5)}</Icon>,
  <Icon><path d="M0 9h3v4M3 11V3h9M6 14V6h4" stroke={BLUE} strokeDasharray="5 1" strokeWidth={1.700} /><circle cx="12.500" cy="6.500" r="3" fill="#d8ecff" stroke={BLUE} /><path d="M12.500 10v4" stroke={BLUE} /></Icon>,
  <Icon><path d="M0 4l4 1 3 5q3 2 4-1t-3-3q-3 0-3 3M4 5l8-2q4 1 2 5-2 2-4 1" /></Icon>,
  <Icon><circle cx="8" cy="6" r="3" fill="#d8ecff" stroke={BLUE} /><path d="M7 9.500v3h2v-3" stroke={BLUE} /></Icon>,
  <Icon><path d="M1 4h10V2M1 4v9h5M4 4v2M8 4v2M13 4v2M8 8h6v6H8z" stroke="#a0a0a0" /></Icon>,
  <Icon><path d="M1 7l3-4h9l2 3M1 7v7M5 7v7M9 7v3M1 7h9M1 10h8" stroke="#a0a0a0" /><circle cx="12.500" cy="9" r="2.800" stroke="#a0a0a0" /><path d="M12.500 12v3" stroke="#a0a0a0" /></Icon>,
  <Icon><path d="M0 3.500h15M.7 1v13M15 1v6" /><path d="M2 13h7" strokeDasharray="1.500 1" /><rect x="10" y="10" width="5" height="3.500" fill="#333" /><path d="M11 9V7.500h3V10" /></Icon>,
];

const Document = () => (
  <DocArea>
    <DocTabs>
      <DocTab>{ic.home}<Label w={22}>East</Label></DocTab>
      <DocTab $active><PlanIcon c="#333a45" /><Label w={39} bold>Level 2</Label><Spacer /><CloseX /></DocTab>
      <DocTab><PlanIcon c="#777b80" /><Label w={36}>Level 1</Label></DocTab>
      <Spacer /><Row><CaretBar /></Row>
    </DocTabs>
    <CanvasRow>
      <CanvasBox>
        <Drawing />
        <NavBar>
          <Icon w={31} h={113}>
            <circle cx="25" cy="4" r="3.300" stroke="#999" strokeWidth={1} /><path d="M23.800 2.800l2.400 2.400M26.200 2.800l-2.400 2.400" stroke="#999" strokeWidth={0.800} />
            <circle cx="14" cy="28" r="9.500" stroke="#a5a5a5" fill="#f4f4f4" /><circle cx="14" cy="27.500" r="4.500" stroke="#8a8a8a" /><path d="M17.500 31l3 3" stroke="#8a8a8a" />
            <text x="15" y="41" fontSize="10" fill="#3b78b8" stroke="none" fontFamily="Liberation Sans, sans-serif">2D</text>
            <path d="M12 48h5l-2.500 3z" fill="#888" stroke="none" /><path d="M3 57.500h25" stroke="#c8c8c8" />
            <rect x="7" y="64" width="10" height="9" fill="#8cc48c" stroke="#888" /><circle cx="17" cy="73" r="4" fill="#f5f5f5" stroke="#888" /><path d="M20 76l3.500 3.500" stroke="#666" strokeWidth={2} />
            <path d="M12 91h5l-2.500 3z" fill="#888" stroke="none" /><circle cx="25" cy="107" r="3.300" stroke="#999" strokeWidth={1} /><path d="M23.500 107h3" stroke="#999" strokeWidth={0.800} />
          </Icon>
        </NavBar>
      </CanvasBox>
      <ScrollColumn $w={17}>
        <Row $h={20}><Chevron d="up" sw={1.800} /></Row>
        <Row $h={219} /><Thumb $w={15} $h={17} /><Spacer /><Row $h={18}><Chevron sw={1.800} /></Row>
      </ScrollColumn>
    </CanvasRow>
    <ViewBar>
      <Spacer $w={11} /><Label w={56} color="#111" size={11}>1/8" = 1'-0"</Label><Spacer $w={10} />
      {viewIcons.map((n, i) => <Slot key={i} $w={20.9}>{n}</Slot>)}
      <Spacer $w={4} /><Chevron d="left" sw={1.800} /><Spacer $w={341} /><Thumb $w={17} $h={15} />
      <Spacer $w={340} /><Chevron d="right" sw={1.800} /><Spacer />
      <Icon w={10} h={10}><path d="M7 1h2v2H7zM7 4h2v2H7zM4 4h2v2H4zM7 7h2v2H7zM4 7h2v2H4zM1 7h2v2H1z" fill="#c0c0c0" stroke="none" /></Icon>
      <Spacer $w={2} />
    </ViewBar>
  </DocArea>
);

const statusIcons: React.ReactNode[] = [
  <Icon><path d="M3 3.500h2q2 0 2 2t-2 2H3q-2 0-2-2t2-2zM11 3.500h2q2 0 2 2t-2 2h-2q-2 0-2-2t2-2zM5 5.500h6" stroke="#dba013" strokeWidth={1.900} />{cursor(6.500, 5)}</Icon>,
  <Icon><path d="M0 11l8-8v8zM2 14h8" stroke={BLUE} fill="#d8e8f6" />{redX(9, 1, 5)}{cursor(9, 6)}</Icon>,
  <Icon><path d="M2 1h8v2L9 4v4l2 2H1l2-2V4L2 3zM6 10v5" stroke="#c2571a" fill="#f7b27c" />{cursor(9, 6)}</Icon>,
  <Icon><path d="M1 4l7-2v11l-7 1z" stroke={BLUE} fill="#8cc4ee" />{redX(9, 1, 5)}{cursor(8.500, 6)}</Icon>,
  <Icon><path d="M5 0v10M0 5h10M3.500 1.500L5 0l1.500 1.500M3.500 8.500L5 10l1.500-1.500M1.500 3.500L0 5l1.500 1.500" />{cursor(9, 6)}</Icon>,
  <Icon><circle cx="8" cy="8" r="5" stroke="#9b9b9b" strokeWidth={3} strokeDasharray="2.600 1.300" /></Icon>,
];

const Status = () => (
  <StatusBar>
    <Spacer $w={1} /><Label w={335}>Select references, then click in empty space to place dimension.</Label><Spacer $w={6} />
    <Icon><path d="M1 7l2-1h4v7l-2 2H1z" fill="#bfe0f7" stroke={BLUE} /><path d="M5 2l2-1h5v4H5z" fill="#a7dc8e" stroke="#2f7a25" /><path d="M10 7v2l2 1 2-1V7M12 10v5M15 7v2" stroke="#3a4a60" strokeWidth={1.500} /></Icon>
    <Spacer $w={8} />
    <Combo $w={204} $h={19} $bg="#fff" $bd="1px solid #dedede"><span /><Chevron c="#b0b0b0" /></Combo>
    <Spacer $w={9} /><Icon w={15}><path d="M2 1.500h11V5H8l-2 4H4l2-4H2zM1 15q0-4.500 5-4.500V15z" fill="#aaa" stroke="#8a8a8a" /></Icon>
    <Spacer $w={5} /><Label w={9}>:0</Label><Spacer $w={24} />
    <Icon><rect x=".8" y="1" width="14.400" height="14" rx="1" fill="#fff" strokeWidth={1.500} /><path d="M1 3.500h14M3 7h3M8 7h5M5 9.500h2M8.500 9.500H13M5 12h2M8.500 12H13" strokeWidth={1.500} /></Icon>
    <Spacer $w={10} /><Icon><path d="M6 1h9v13H6v-3l3-3-3-3z" fill="#a0a0a0" stroke="#a0a0a0" /><path d="M0 10h8M5 7l4 3-4 3" stroke="#888" /></Icon>
    <Spacer $w={8} />
    <Combo $w={204} $h={19} $bg="#fff" $bd="1px solid #dedede"><Label w={64} color="#808080">Main Model</Label><Chevron c="#9a9a9a" /></Combo>
    <Spacer $w={224} />
    {statusIcons.map((n, i) => <Slot key={i} $w={25.8}>{n}</Slot>)}
    <Spacer $w={2} /><Icon><path d="M.5 1.500h15L10 9v6H7V9z" fill="#9fb0bd" stroke="#5b6670" /><path d="M3 3h10" stroke="#e5edf2" /></Icon>
    <Label w={10}>:0</Label>
  </StatusBar>
);

const TaskbarRow = () => (
  <Taskbar>
    <Slot $w={48}><Icon><path d="M0 2.200l6.500-.9v6.200H0zM7.500 1.200L16 0v7.500H7.500zM0 8.500h6.500v6.200L0 13.800zM7.500 8.500H16V16l-8.500-1.200z" fill="#fff" stroke="none" /></Icon></Slot>
    <SearchBox>
      <Icon w={17} h={17}><circle cx="10.500" cy="6.500" r="5.300" stroke="#222" strokeWidth={1.400} /><path d="M6.500 10.500L1 16" stroke="#222" strokeWidth={1.400} /></Icon>
      <Label w={128} size={14.500}>Type here to search</Label>
    </SearchBox>
    <TaskItem><Icon><circle cx="8" cy="8" r="6.700" stroke="#fff" strokeWidth={2} /></Icon></TaskItem>
    <TaskItem><Icon><path d="M1.500 0v3h9V0M1.500 16v-3h9v3M1.500 5.500h9v5h-9zM14.500 0v3M14.500 6v10M13.500 5.500h2" stroke="#fff" strokeWidth={1.100} /></Icon></TaskItem>
    <Spacer $w={1} />
    <TaskItem $open><Icon w={22} h={22}>
      <circle cx="11" cy="11" r="11" fill="#dd4b3e" stroke="none" /><path d="M1.500 5.500L7 14l4 2-3 6A11 11 0 0 1 1.500 5.500z" fill="#1f9d58" stroke="none" /><path d="M20.700 6A11 11 0 0 1 9 21.900L15.500 12 14 6z" fill="#fcc934" stroke="none" /><circle cx="11" cy="11" r="4.700" fill="#4285f4" stroke="#fff" />
    </Icon></TaskItem>
    <TaskItem $open><Icon w={22} h={20}><path d="M0 1h8l2 2h12v15H0z" fill="#e9b233" stroke="none" /><path d="M0 5h22v13H0z" fill="#fbd867" stroke="none" /><path d="M4 19v-7q0-1 1-1h12q1 0 1 1v7h-4v-4H8v4z" fill="#3a96d6" stroke="none" /></Icon></TaskItem>
    <TaskItem $open><Icon w={24} h={24}><path d="M17 1L23 3.500v17L17 23 5.500 12.800 2.500 15.500 0 14.200V9.800l2.500-1.300 3 2.700z" fill="#9461d8" stroke="none" /><path d="M17 7.500v9L11.500 12zM2 10.300v3.400L4 12z" fill="#2b2a28" stroke="none" /><path d="M5.500 12.800L2.500 15.500 0 14.200 17 1v6.500z" fill="#7a44b5" stroke="none" /><path d="M17 1l6 2.500v17L17 23z" fill="#b586ee" stroke="none" /></Icon></TaskItem>
    <TaskItem $open><Icon w={22} h={22}><rect x="10" y="3" width="11.500" height="16" fill="#fff" stroke="#2b579a" strokeWidth={1} /><path d="M13 6h7M13 8.500h7M13 11h7M13 13.500h7M13 16h7" stroke="#2b579a" strokeWidth={1} /><path d="M0 3l13-3v22L0 19z" fill="#2559a0" stroke="none" /><text x="1.800" y="15" fontSize="10.500" fontWeight="700" fill="#fff" stroke="none" fontFamily="Liberation Sans, sans-serif">W</text></Icon></TaskItem>
    <TaskItem $open><Icon w={24} h={24}><circle cx="12" cy="12" r="12" fill="#1b7fd0" stroke="none" /><path d="M1 8Q4 0 12 0q11 0 12 11 0 6-6 6-5-.5-4-3 1.500-5-4-7Q5 5 1 8z" fill="#38c6b8" stroke="none" /><path d="M14 0q9 1 10 10 0 5-4 6.500Q23 6 14 0z" fill="#5fd75f" stroke="none" /><path d="M7 14q0 7 8 9 4 0 7-4-6 2-9.500-1t-1-8Q7.500 9 7 14z" fill="#0c4f97" stroke="none" /></Icon></TaskItem>
    <TaskItem $active><RevitTile><RLetter /></RevitTile></TaskItem>
    <Spacer />
    <Slot $w={24}><Icon w={12} h={8}><path d="M1 7l5-5 5 5" stroke="#fff" strokeWidth={1.300} /></Icon></Slot>
    <Slot $w={24}><Icon w={17} h={14}><rect x="5" y="4" width="10.500" height="7" stroke="#fff" /><rect x="7" y="6" width="7" height="3.500" fill="#fff" stroke="none" /><path d="M1 3h4v3q-2 2-4 0zM2 1v2M4 1v2M3 7v4h2" stroke="#fff" strokeWidth={1} /></Icon></Slot>
    <Slot $w={24}><Icon w={14} h={14}><path d="M1 13Q1 2 13 1.500M4.500 13Q4.500 5.500 13 5M8 13q0-4 5-4.500" stroke="#ddd" strokeWidth={1.300} /><circle cx="12" cy="12" r="1.500" fill="#fff" stroke="none" /></Icon></Slot>
    <Slot $w={24}><Icon w={17} h={14}><path d="M1 5h2l4-3.500v11L3 9H1z" stroke="#fff" strokeWidth={1.100} /><path d="M9 5q1.500 2 0 4M11 3q3 4 0 8M13.500 1.500q4 5.500 0 11" stroke="#ddd" strokeWidth={1.100} /></Icon></Slot>
    <Spacer $w={5} /><Row><Label w={23}>ENG</Label></Row><Spacer $w={14} />
    <ClockBox><Label w={42}>9:57 PM</Label><Label w={51}>1/30/2021</Label></ClockBox>
    <Spacer $w={4} />
    <Slot $w={48}><Icon w={16} h={16}><path d="M0 0h16v12.500h-5L8 16l-2-3.500H0z" fill="#fff" stroke="none" /><path d="M3 4h10M3 6.500h10M3 9h6" stroke="#2b2a28" strokeWidth={1} /></Icon></Slot>
    <Spacer $w={3} /><VLine $h={40} $c="#696866" /><Spacer $w={4} />
  </Taskbar>
);

export default function App() {
  return (
    <Screen>
      <GlobalStyle />
      <Header />
      <RibbonBar />
      <Options />
      <Workspace><Side /><Splitter /><Document /></Workspace>
      <Status />
      <TaskbarRow />
    </Screen>
  );
}
